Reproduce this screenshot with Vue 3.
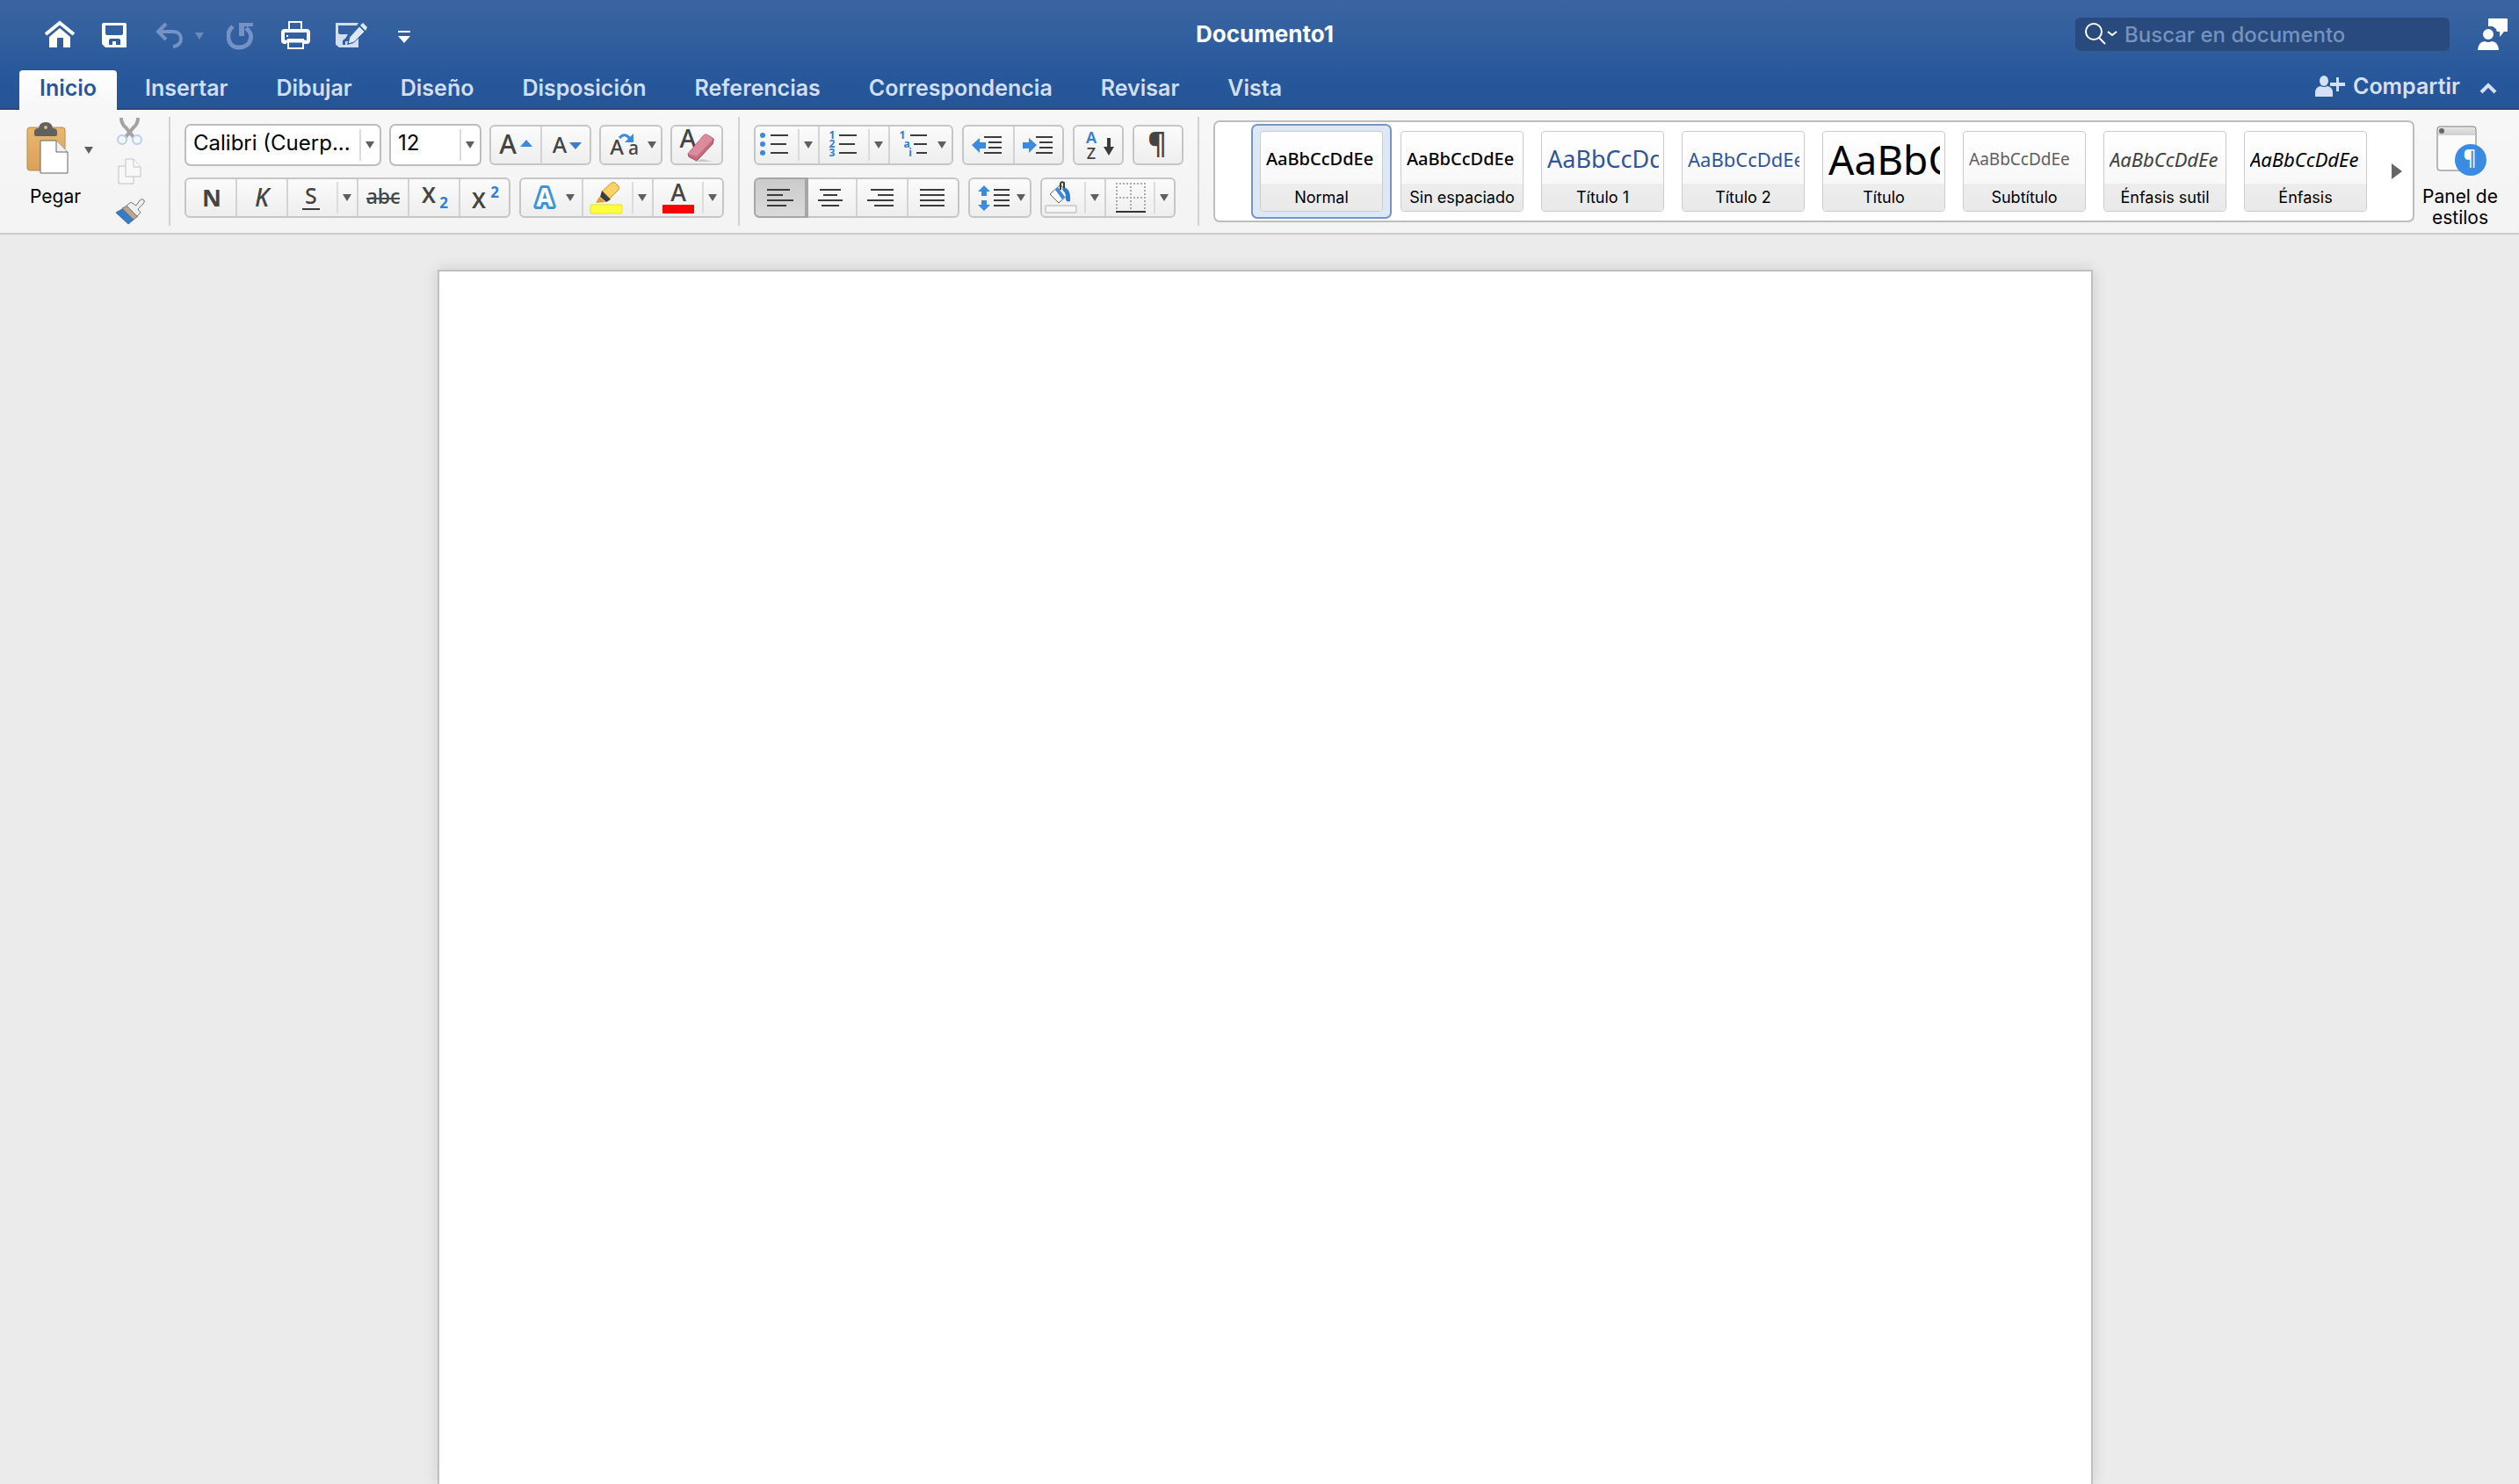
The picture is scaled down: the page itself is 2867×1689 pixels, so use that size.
<script setup>
import { ref, h } from 'vue'

const tabs = ['Inicio', 'Insertar', 'Dibujar', 'Diseño', 'Disposición', 'Referencias', 'Correspondencia', 'Revisar', 'Vista']
const activeTab = ref('Inicio')

const styles = [
  { name: 'Normal', kind: 'body' },
  { name: 'Sin espaciado', kind: 'body' },
  { name: 'Título 1', kind: 'h1' },
  { name: 'Título 2', kind: 'h2' },
  { name: 'Título', kind: 'title' },
  { name: 'Subtítulo', kind: 'sub' },
  { name: 'Énfasis sutil', kind: 'soft' },
  { name: 'Énfasis', kind: 'em' }
]
const activeStyle = ref('Normal')

const alignments = [
  { label: 'Alinear a la izquierda', d: 'M13 12h26M13 18h18M13 24h30M13 30h22' },
  { label: 'Centrar', d: 'M15 12h24M19 18h16M13 24h28M17 30h20' },
  { label: 'Alinear a la derecha', d: 'M15 12h26M23 18h18M11 24h30M19 30h22' },
  { label: 'Justificar', d: 'M13 12h28M13 18h28M13 24h28M13 30h28' }
]
const activeAlign = ref(alignments[0].label)

// Narrow drop-down half of a split button: hairline plus triangle
const Caret = () =>
  h('svg', { width: 23, height: 42, 'aria-hidden': 'true' }, [
    h('rect', { x: 0, y: 3, width: 2, height: 36, fill: '#dcdcdc' }),
    h('path', { d: 'M7 17h10l-5 8z', fill: '#5f5f5f' })
  ])
</script>

<template>
  <div class="app">
    <header class="head">
      <div class="titlebar">
        <div class="quick">
          <button aria-label="Inicio">
            <svg width="36" height="36"><path d="M2 18 18 5l16 13" fill="none" stroke="#fff" stroke-width="4" /><path d="M6 21 18 11l12 10v12h-8V22h-7v11H6z" fill="#fff" /></svg>
          </button>
          <button aria-label="Guardar">
            <svg width="36" height="36"><path fill="#fff" fill-rule="evenodd" d="M6 5h24q2 0 2 2v26H8l-4-4V7q0-2 2-2zm2 3v9q0 2 2 2h16q2 0 2-2V8zm4 22h4v-4h4v4h5v-5q0-2-2-2h-9q-2 0-2 2z" /></svg>
          </button>
          <div class="undo">
            <button aria-label="Deshacer">
              <svg width="36" height="36"><path d="M15 6 6 15l9 9M7 15h16c12 0 12 16 0 17" fill="none" stroke="#7492c5" stroke-width="4" /></svg>
            </button>
            <button aria-label="Opciones de deshacer">
              <svg width="14" height="36"><path d="M4 16h10l-5 8z" fill="#6a89bd" /></svg>
            </button>
          </div>
          <button aria-label="Repetir">
            <svg width="36" height="36"><path d="M7 9C-2 17 1 33 14 33c14 0 18-15 8-22" fill="none" stroke="#7492c5" stroke-width="5" /><path d="M14 5h16v4H20v11h-6z" fill="#7492c5" /></svg>
          </button>
          <button aria-label="Imprimir">
            <svg width="36" height="36" fill="none" stroke="#fff"><path d="M9 13V4h14v9" stroke-width="2" /><path d="M6 27H4q-2 0-2-2V16q0-2 2-2h25q2 0 2 2v9q0 2-2 2h-3" stroke-width="4" /><path d="M7 24h18v10H8V24" stroke-width="2" /><path d="M4 26h24" stroke-width="3" /><path d="M6 20h2" stroke-width="2" /></svg>
          </button>
          <button aria-label="Guardar como">
            <svg width="36" height="36"><path fill="#d0ddf3" fill-rule="evenodd" d="M0 5h26l-2 3H3v8q0 2 2 2h9l-3 5q-3 1-3 3v4h3v-4h3l-1 4 7-2 6-6v11H4l-5-4V7z" /><path d="m14 29 2-8L27 9l6 6-12 12z" fill="#dce7f8" stroke="#325e9f" /><path d="m28 8 3-3 5 5-2 4z" fill="#dce7f8" /></svg>
          </button>
          <button aria-label="Personalizar barra de herramientas">
            <svg width="36" height="36"><path d="M9 14h14v2H9zM9 20h14l-7 8z" fill="#fff" /></svg>
          </button>
        </div>
        <h1>Documento1</h1>
        <div class="right">
          <label class="search">
            <svg width="38" height="28" fill="none" stroke="#fff" stroke-width="2"><circle cx="11" cy="11" r="9" /><path d="m17 18 7 7" /><path d="m27 11 5 4 5-4" /></svg>
            <input type="text" aria-label="Buscar en documento" placeholder="Buscar en documento" />
          </label>
          <button aria-label="Comentarios">
            <svg width="36" height="38"><path d="M14 1h20q1 0 1 1v14h-4l-5 6v-6h-3a8 8 0 0 0-10-6V2q0-1 1-1z" fill="#fff" /><circle cx="13" cy="19" r="6" fill="#fff" /><path d="M1 37q1-10 8-10 4 2 8 0 7 0 8 10z" fill="#fff" /></svg>
          </button>
        </div>
      </div>

      <div class="tabbar">
        <nav class="tabs">
          <a v-for="tab in tabs" :key="tab" href="#" :class="{ on: tab === activeTab }" @click.prevent="activeTab = tab">{{ tab }}</a>
        </nav>
        <div class="share">
          <button>
            <svg width="34" height="26" fill="#d5e0f4"><ellipse cx="10" cy="7" rx="5" ry="6" /><path d="M0 25V19q1-5 6-6 4 2 8 0 5 1 6 6v6zM17 9h7V3h3v6h7v4h-7v6h-3v-6h-7z" /></svg>
            <span>Compartir</span>
          </button>
          <button aria-label="Contraer cinta">
            <svg width="20" height="26" fill="none" stroke="#d5e0f4" stroke-width="4"><path d="m2 20 8-8 8 8" /></svg>
          </button>
        </div>
      </div>
    </header>

    <section class="ribbon">
      <div class="clip">
        <div class="paste">
          <button class="paste-icons" aria-label="Pegar opciones">
            <svg width="80" height="64">
              <defs><linearGradient id="board" x2="0" y2="1"><stop offset="0" stop-color="#e8b76e" /><stop offset="1" stop-color="#d9a159" /></linearGradient></defs>
              <rect x="1" y="9" width="43" height="49" rx="3" fill="url(#board)" stroke="#bd8c48" />
              <path d="M9 14q0-4 5-4 1-7 8-7t8 7q5 0 5 4v3q0 2-3 2H12q-3 0-3-2z" fill="#606060" /><circle cx="22" cy="9" r="2" fill="#e8b76e" />
              <path d="M16 24h18l13 13v24H16z" fill="#fff" stroke="#666" /><path d="M34 24v13h13" fill="#f2f2f2" stroke="#666" />
              <path d="M66 31h10l-5 8z" fill="#5f5f5f" />
            </svg>
          </button>
          <span>Pegar</span>
        </div>
        <div class="clip-tools">
          <button aria-label="Cortar">
            <svg width="32" height="32" fill="none"><path d="M6 1q0 7 5 11l9 11M25 1q0 7-5 11l-9 11" stroke="#a3a3a3" stroke-width="4" /><circle cx="7" cy="26" r="5" stroke="#b6cfee" stroke-width="2" /><circle cx="24" cy="26" r="5" stroke="#b6cfee" stroke-width="2" /></svg>
          </button>
          <button aria-label="Copiar">
            <svg width="32" height="32" fill="#f8f8f8" stroke="#c2c2c2"><path d="M3 10h17v20H3z" /><path d="M11 2h9l8 9v11H11z" /><path d="M20 2v9h8" /></svg>
          </button>
          <button aria-label="Copiar formato">
            <svg width="34" height="32"><path d="M0 17 7 13 20 25 14 30z" fill="#347cc9" stroke="#4b6c91" /><path d="M7 12l6-3 12 12-5 4z" fill="#bba58c" stroke="#777" /><path d="M12 9l5-4 6 4 4-6q3-3 5 0 1 2-1 4l-6 6 3 4-4 4z" fill="#eee" stroke="#777" /></svg>
          </button>
        </div>
      </div>

      <div class="sep"></div>

      <div class="tools">
        <div class="row tight">
          <div class="combo font">
            <select aria-label="Fuente"><option>Calibri (Cuerp...</option></select><Caret />
          </div>
          <div class="combo size">
            <select aria-label="Tamaño de fuente"><option>12</option></select><Caret />
          </div>
          <div class="group">
            <button class="cell" aria-label="Aumentar tamaño">
              <svg width="56" height="42" class="ink"><text x="19" y="31" font-size="30" font-weight="500">A</text><path d="M33 23h14l-7-8z" fill="#3b8ade" /></svg>
            </button>
            <button class="cell" aria-label="Disminuir tamaño">
              <svg width="54" height="42" class="ink"><text x="20" y="30" font-size="25" font-weight="500">A</text><path d="M31 18h14l-7 8z" fill="#3b7dcb" /></svg>
            </button>
          </div>
          <div class="group">
            <button class="cell" aria-label="Cambiar mayúsculas">
              <svg width="68" height="42" class="ink"><text x="18" y="32" font-size="24" font-weight="500">A</text><text x="37" y="32" font-size="21" font-weight="500">a</text><path d="M21 13q6-7 12 1" fill="none" stroke="#3b8ade" stroke-width="3" /><path d="M37 8v10H27z" fill="#3b8ade" /><path d="M53 17h10l-5 8z" fill="#5f5f5f" /></svg>
            </button>
          </div>
          <div class="group">
            <button class="cell" aria-label="Borrar formato">
              <svg width="56" height="42" class="ink"><text x="18" y="24" font-size="29" font-weight="500">A</text><path d="M24 40h22l-12-3z" fill="#c9c9c9" /><path d="M18 31 36 10q1-1 3-1l7 4q2 1 1 3l-1 4-17 18q-1 1-3 0l-6-3q-1 0-1-1z" fill="#c66a80" stroke="#9c4a60" /><path d="M18 31 36 10q1-1 3-1l7 4q1 1 0 2L28 34z" fill="#dc8b9e" /></svg>
            </button>
          </div>
        </div>

        <div class="row">
          <div class="group">
            <button class="cell" aria-label="Negrita">
              <svg width="56" height="42" class="ink"><text x="29" y="31" font-size="27" font-weight="700">N</text></svg>
            </button>
            <button class="cell" aria-label="Cursiva">
              <svg width="56" height="42" class="ink"><text x="28" y="31" font-size="28" font-weight="500" font-style="italic">K</text></svg>
            </button>
            <div class="cell split">
              <button aria-label="Subrayado">
                <svg width="55" height="42" class="ink"><text x="26" y="28" font-size="25" font-weight="500">S</text><path d="M16 33h20v2H16z" fill="#3a3a3a" /></svg>
              </button>
              <button aria-label="Opciones de subrayado"><Caret /></button>
            </div>
            <button class="cell" aria-label="Tachado">
              <svg width="56" height="42" class="ink"><text x="28" y="28" font-size="23" font-weight="500">abc</text><path d="M9 21h38v2H9z" fill="#4a4a4a" /></svg>
            </button>
            <button class="cell" aria-label="Subíndice">
              <svg width="56" height="42" class="ink"><text x="22" y="27" font-size="25" font-weight="600">X</text><text x="39" y="33" font-size="17" font-weight="700" class="blue">2</text></svg>
            </button>
            <button class="cell" aria-label="Superíndice">
              <svg width="55" height="42" class="ink"><text x="21" y="33" font-size="25" font-weight="600">X</text><text x="39" y="21" font-size="17" font-weight="700" class="blue">2</text></svg>
            </button>
          </div>
          <div class="group">
            <button class="cell" aria-label="Efectos de texto">
              <svg width="69" height="42" class="ink"><text x="27" y="31" font-size="28" font-weight="700" class="halo">A</text><path d="M51 17h10l-5 8z" fill="#5f5f5f" /></svg>
            </button>
            <div class="cell split">
              <button aria-label="Color de resaltado">
                <svg width="55" height="42"><rect x="8" y="29" width="36" height="10" rx="1" fill="#ffff3c" stroke="#e0e030" /><path d="M21 14 32 4q2-1 4 0l4 4q1 2 0 4L30 22z" fill="#fdd262" stroke="#c99b3c" /><path d="M21 13l10 10-5 3-7-6z" fill="#3c3c3c" /><path d="M18 20l7 6-11 1z" fill="#e0a030" /></svg>
              </button>
              <button aria-label="Opciones de resaltado"><Caret /></button>
            </div>
            <div class="cell split">
              <button aria-label="Color de fuente">
                <svg width="55" height="42" class="ink"><text x="28" y="25" font-size="27" font-weight="500">A</text><rect x="10" y="29" width="36" height="10" rx="1" fill="#f00" /></svg>
              </button>
              <button aria-label="Opciones de color"><Caret /></button>
            </div>
          </div>
        </div>
      </div>

      <div class="sep"></div>

      <div class="tools">
        <div class="row">
          <div class="group">
            <div class="cell split">
              <button aria-label="Viñetas">
                <svg width="48" height="42" class="lines"><g fill="#3b8ade" stroke="none"><circle cx="8" cy="10" r="3" /><circle cx="8" cy="20" r="3" /><circle cx="8" cy="30" r="3" /></g><path d="M17 10h20M17 20h18M17 30h20" /></svg>
              </button>
              <button aria-label="Opciones de viñetas"><Caret /></button>
            </div>
            <div class="cell split">
              <button aria-label="Numeración">
                <svg width="55" height="42" class="lines"><g class="mini"><text x="14" y="14">1</text><text x="14" y="24">2</text><text x="14" y="34">3</text></g><path d="M22 10h20M22 20h18M22 30h20" /></svg>
              </button>
              <button aria-label="Opciones de numeración"><Caret /></button>
            </div>
            <button class="cell" aria-label="Lista multinivel">
              <svg width="70" height="42" class="lines"><g class="mini"><text x="14" y="14">1</text><text x="19" y="24">a</text><text x="23" y="34">i</text></g><path d="M23 10h19M27 20h15M30 30h12" /><path d="M54 17h10l-5 8z" fill="#5f5f5f" stroke="none" /></svg>
            </button>
          </div>
          <div class="group">
            <button class="cell" aria-label="Disminuir sangría">
              <svg width="56" height="42" class="lines"><path d="M23 12h20M28 18h15M28 24h15M23 30h20" /><path d="M9 21l9-8v5h7v7h-7v5z" class="arrow" /></svg>
            </button>
            <button class="cell" aria-label="Aumentar sangría">
              <svg width="54" height="42" class="lines"><path d="M24 12h19M28 18h15M28 24h15M24 30h19" /><path d="M25 21l-9-8v5H9v7h7v5z" class="arrow" /></svg>
            </button>
          </div>
          <div class="group">
            <button class="cell" aria-label="Ordenar">
              <svg width="54" height="42" class="ink"><text x="19" y="19" font-size="18" font-weight="600" class="blue">A</text><text x="19" y="37" font-size="18" font-weight="500">Z</text><path d="M37 13h4v10h4l-6 10-6-10h4z" fill="#3a3a3a" /></svg>
            </button>
          </div>
          <div class="group">
            <button class="cell" aria-label="Mostrar marcas de párrafo">
              <svg width="54" height="42" class="ink"><text x="26" y="31" font-size="33" font-weight="600">¶</text></svg>
            </button>
          </div>
        </div>

        <div class="row">
          <div class="group">
            <button v-for="a in alignments" :key="a.label" class="cell" :class="{ pressed: a.label === activeAlign }" :aria-label="a.label" @click="activeAlign = a.label">
              <svg width="56" height="42" class="lines"><path :d="a.d" /></svg>
            </button>
          </div>
          <div class="group">
            <button class="cell" aria-label="Interlineado">
              <svg width="68" height="42" class="lines"><path d="M27 12h18M27 18h18M27 24h18M27 30h18" /><path d="M16 7l7 7h-4v5h-6v-5H9zM16 36l7-7h-4v-5h-6v5H9z" class="arrow" /><path d="M53 17h10l-5 8z" fill="#5f5f5f" stroke="none" /></svg>
            </button>
          </div>
          <div class="group">
            <div class="cell split">
              <button aria-label="Sombreado">
                <svg width="48" height="42"><rect x="4" y="30" width="35" height="8" rx="1" fill="#f6f6f6" stroke="#d0d0d0" stroke-width="2" /><path d="M9 17 21 6l9 11-11 10z" fill="#fff" stroke="#666" /><path d="m15 12 3-3 8 11-3 3z" fill="#3b8ade" /><path d="M24 9q9 1 8 16-6 2-5-5 0-5-4-8z" fill="#2f7bd0" /><path d="M21 12V5q1-3 4-1v6" fill="none" stroke="#3a3f30" stroke-width="2" /></svg>
              </button>
              <button aria-label="Opciones de sombreado"><Caret /></button>
            </div>
            <div class="cell split">
              <button aria-label="Bordes">
                <svg width="54" height="42" fill="none" stroke="#aaa" stroke-width="2"><path d="M11 5h34M11 21h34M12 8v26M28 8v26M44 8v26" stroke-dasharray="2 2" /><path d="M11 37h34" stroke="#333" /></svg>
              </button>
              <button aria-label="Opciones de bordes"><Caret /></button>
            </div>
          </div>
        </div>
      </div>

      <div class="sep"></div>

      <div class="gallery">
        <div class="cards">
          <button v-for="s in styles" :key="s.name" class="slot" :class="{ on: s.name === activeStyle }" @click="activeStyle = s.name">
            <span class="card">
              <span class="preview"><span :class="s.kind">AaBbCcDdEe</span></span>
              <span class="name">{{ s.name }}</span>
            </span>
          </button>
        </div>
        <button class="more" aria-label="Más estilos"><svg width="12" height="18"><path d="M0 0l12 9-12 9z" fill="#666" /></svg></button>
      </div>

      <button class="pane">
        <svg width="60" height="60">
          <defs><linearGradient id="bar" x2="0" y2="1"><stop offset="0" stop-color="#e4e4e4" /><stop offset="1" stop-color="#cfcfcf" /></linearGradient></defs>
          <rect x="2" y="2" width="44" height="50" rx="3" fill="#fbfbfb" stroke="#777" /><path d="M3 12V5q0-2 2-2h38q2 0 2 2v7z" fill="url(#bar)" /><circle cx="7" cy="7" r="3" fill="#666" />
          <circle cx="40" cy="40" r="18" fill="#3a8ce2" /><text x="39" y="46" class="mark">¶</text>
        </svg>
        <span>Panel de estilos</span>
      </button>
    </section>

    <main class="canvas">
      <textarea class="page" aria-label="Documento" spellcheck="false"></textarea>
    </main>
  </div>
</template>

<style>
body { background: #ebebeb; }
</style>

<style scoped>
.app { min-height: 100vh; display: flex; flex-direction: column; font-family: Inter, "Liberation Sans", sans-serif; color: #000; }
.app * { box-sizing: border-box; }
button { appearance: none; border: 0; padding: 0; margin: 0; background: none; font: inherit; color: inherit; display: block; flex: none; }
svg { display: block; flex: none; }

.head { background: linear-gradient(#3b65a2, #26579a 76%, #255596); border-bottom: 2px solid #25497f; }
.titlebar { height: 78px; display: grid; grid-template-columns: 1fr auto 1fr; align-items: center; padding: 0 12px 0 24px; }
.quick { display: flex; gap: 26px; padding-left: 26px; }
.undo { display: flex; gap: 8px; }
h1 { margin: 0; font-size: 26px; line-height: 32px; font-weight: 700; color: #fff; }
.right { display: flex; justify-content: flex-end; align-items: center; gap: 31px; }
.search { width: 426px; height: 38px; border-radius: 6px; background: #284a7c; display: flex; align-items: center; gap: 8px; padding: 0 10px; }
.search input { flex: 1; min-width: 0; border: 0; outline: 0; background: none; padding: 2px 0 0; font: 500 24px/32px Inter, sans-serif; color: #fff; }
.search input::placeholder { color: #7593c1; opacity: 1; }

.tabbar { display: flex; justify-content: space-between; align-items: flex-end; height: 45px; padding: 0 25px 0 22px; }
.tabs { display: flex; gap: 9px; }
.tabs a { height: 43px; padding: 0 23px; font-size: 25px; line-height: 40px; font-weight: 600; color: #d0dff7; text-decoration: none; }
.tabs a.on { background: linear-gradient(#fff, #f6f6f6); color: #2a5699; border-radius: 4px 4px 0 0; height: 45px; margin-bottom: -2px; }
.share { display: flex; align-items: center; gap: 22px; height: 43px; padding-bottom: 8px; color: #d5e0f4; }
.share button { display: flex; align-items: center; gap: 9px; font-size: 25px; line-height: 32px; font-weight: 600; }

.ribbon { display: flex; align-items: flex-start; padding: 8px 18px 5px 28px; background: linear-gradient(#f7f7f7, #f3f3f3); border-bottom: 2px solid #cacaca; }
.sep { flex: none; width: 2px; height: 124px; margin: 0 16px; background: #d2d2d2; }

.clip { flex: none; width: 148px; display: flex; justify-content: space-between; }
.paste { display: flex; flex-direction: column; padding: 3px 0 0 2px; }
.paste span { padding-left: 4px; margin-top: 10px; font-size: 21px; line-height: 28px; }
.clip-tools { display: flex; flex-direction: column; gap: 14px; width: 44px; }

.tools { flex: none; display: flex; flex-direction: column; gap: 13px; padding-top: 8px; }
.row { display: flex; align-items: center; gap: 10px; }
.row.tight { gap: 9px; }
.row:first-child { height: 48px; }
.combo { display: flex; align-items: center; height: 48px; background: #fff; border: 2px solid #bdbdbd; border-radius: 7px; }
.combo.font { width: 224px; }
.combo.size { width: 105px; }
.combo select { appearance: none; flex: 1; min-width: 0; height: 40px; border: 0; outline: 0; background: none; padding: 0 0 4px 8px; font: 400 24px/32px Inter, sans-serif; color: #000; }
.group { display: flex; height: 46px; border: 2px solid #c6c6c6; border-radius: 6px; background: linear-gradient(#fbfbfb, #eee); }
.cell { border-right: 2px solid #d3d3d3; }
.cell:last-child { border-right: 0; }
.split { display: flex; }
.pressed { background: linear-gradient(#cbcbcb, #dadada); box-shadow: 0 0 0 2px #a6a6a6; border-color: #a6a6a6; border-radius: 5px 0 0 5px; }

.ink text { font-family: "Noto Sans", sans-serif; fill: #444; text-anchor: middle; }
.ink text.blue { fill: #2f7fd6; }
.ink text.halo { fill: #fff; stroke: #3c93d6; stroke-width: 6px; stroke-linejoin: round; paint-order: stroke; }
.lines { fill: none; stroke: #3c3c3c; stroke-width: 2px; }
.lines .arrow { fill: #3b8ade; stroke: none; }
.mini text { font: 700 12px "Noto Sans", sans-serif; fill: #2f7fd6; stroke: none; text-anchor: middle; }

.gallery { flex: 1; min-width: 0; height: 116px; margin-top: 4px; border: 2px solid #bdbdbd; border-radius: 7px; background: #fff; display: flex; align-items: center; justify-content: space-between; padding: 0 12px 0 41px; }
.cards { flex: 1; min-width: 0; display: flex; overflow: hidden; }
.slot { width: 160px; height: 108px; padding: 6px 8px; border: 2px solid transparent; border-radius: 7px; }
.slot.on { background: #dee8f5; border-color: #7396c6; }
.card { display: flex; flex-direction: column; width: 140px; height: 92px; border: 1px solid #ccc; border-radius: 4px; background: linear-gradient(#fff, #f8f8f8 66%); overflow: hidden; }
.preview { flex: 1; min-height: 0; display: flex; align-items: center; margin: 0 5px 0 6px; padding-top: 3px; overflow: hidden; white-space: nowrap; font: 500 20px/28px "Noto Sans", sans-serif; text-align: left; }
.name { height: 31px; background: linear-gradient(#ededed, #e9e9e9); font-size: 18px; line-height: 32px; text-align: center; }
.h1 { font-size: 27px; font-weight: 400; color: #2f5597; }
.h2 { font-size: 22px; font-weight: 400; color: #2f5597; }
.title { font-size: 46px; font-weight: 400; }
.sub { font-size: 19px; font-weight: 400; color: #5f5f5f; }
.soft { font-size: 22px; font-weight: 400; font-style: italic; color: #404040; }
.em { font-size: 22px; font-weight: 400; font-style: italic; }

.pane { width: 98px; display: flex; flex-direction: column; align-items: center; margin-left: 3px; padding-top: 9px; font-size: 21px; line-height: 24px; text-align: center; }
.pane svg { margin: 0 0 10px 4px; }
.mark { font: 500 23px "Noto Sans", sans-serif; fill: #fff; text-anchor: middle; }

.canvas { flex: 1; display: flex; justify-content: center; padding: 40px 0 0 13px; background: #ebebeb; overflow: hidden; }
.page { flex: 0 1 1884px; resize: none; outline: 0; border: 2px solid #bfbfbf; border-bottom: 0; background: #fff; padding: 120px; box-shadow: 0 0 16px rgba(0, 0, 0, 0.14); }
</style>
